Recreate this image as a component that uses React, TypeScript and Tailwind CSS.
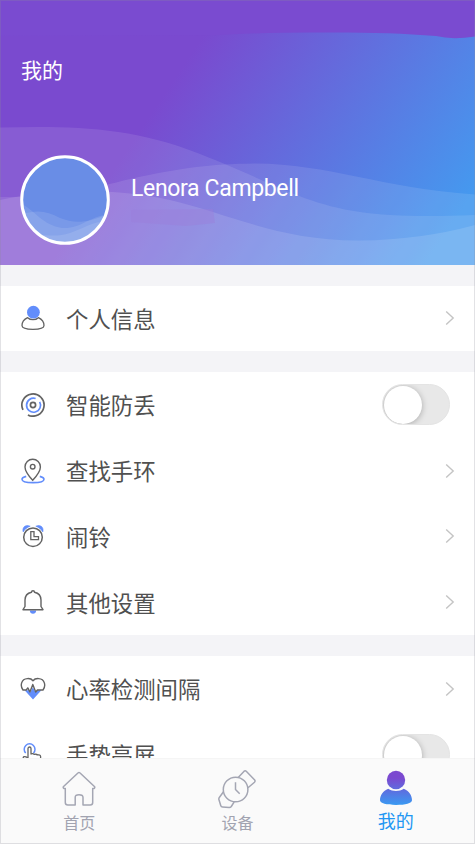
import { useState, type ReactNode } from 'react';

interface MenuItem {
  label: string;
  icon: ReactNode;
  toggle?: boolean;
}

const DARK = '#636363';
const BLUE = '#628dfb';

function PersonIcon() {
  return (
    <svg width="24" height="26" viewBox="0 0 24 26" fill="none">
      <path d="M6.6 12.7C3.3 14.3 1 17.3 1 20.6 1 23 5.8 24.4 12 24.4S23 23 23 20.6c0-3.3-2.3-6.3-5.6-7.9-1.4 1.3-3.3 2-5.4 2s-4-.7-5.4-2Z" stroke={DARK} strokeWidth="1.3" />
      <circle cx="12.4" cy="7.2" r="6.4" fill={BLUE} />
    </svg>
  );
}

function RadarIcon() {
  return (
    <svg width="24" height="24" viewBox="0 0 24 24" fill="none" strokeWidth="1.7">
      <path d="M2 16.9A11.1 11.1 0 1 1 6.9 21.9" stroke={DARK} />
      <path d="M17.7 7.3A7 7 0 1 1 13 5.1" stroke={BLUE} transform="rotate(14 12 12)" />
      <circle cx="12" cy="12" r="2.6" stroke={DARK} />
    </svg>
  );
}

function PinIcon() {
  return (
    <svg width="24" height="26" viewBox="0 0 24 26" fill="none" strokeWidth="1.4">
      <path d="M5.2 18.4C2.700 19 1 20 1 21.200 1 23.300 5.900 24.600 12 24.600s11-1.300 11-3.400c0-1.200-1.700-2.200-4.200-2.800" stroke={BLUE} strokeWidth="1.600" />
      <path d="M11.700 22.300C8.200 18.400 4 13.300 4 8.900a7.700 7.700 0 0 1 15.400 0c0 4.400-4.200 9.500-7.700 13.400Z" stroke={DARK} fill="white" />
      <circle cx="11.700" cy="8.700" r="2.300" stroke={DARK} />
    </svg>
  );
}

function AlarmIcon() {
  return (
    <svg width="24" height="24" viewBox="0 0 24 24" fill="none">
      <path d="M2.200 8C.8 3.500 4.500 0 9.200 2.200 6.200 3.200 3.900 5.200 2.200 8ZM21.800 8C23.200 3.500 19.500 0 14.800 2.200 17.800 3.200 20.100 5.200 21.800 8Z" fill={BLUE} stroke={BLUE} strokeWidth=".6" />
      <circle cx="12" cy="13.200" r="9.300" stroke={DARK} strokeWidth="1.500" />
      <path d="M9.800 7.700h3.200v5h4.500v3H9.800Z" stroke={DARK} strokeWidth="1.300" />
    </svg>
  );
}

function BellIcon() {
  return (
    <svg width="24" height="26" viewBox="0 0 24 26" fill="none">
      <path d="M8.800 21.500h6.400c-.2 2.300-1.400 3.200-3.200 3.200s-3-.9-3.200-3.200Z" fill={BLUE} />
      <path d="M10.500 3.200c0-1.900 3-1.900 3 0 3.800.8 6.500 3.800 6.500 7.800v6.500l2 3.200H2l2-3.200V11c0-4 2.700-7 6.500-7.800Z" stroke={DARK} strokeWidth="1.400" strokeLinejoin="round" />
    </svg>
  );
}

function HeartIcon() {
  return (
    <svg width="26" height="24" viewBox="0 0 26 24" fill="none">
      <path d="M4.600 13.200 13 22.500l8.400-9.300-4.100.1-1.800 2-2.700-5-2.500 5-1.300-2.100Z" fill={BLUE} />
      <path d="M3 13C-.2 8.700 1.200 2 7.300 1.600 9.700 1.400 11.800 2.200 13 3.700 14.200 2.200 16.300 1.400 18.700 1.600 24.800 2 26.200 8.700 23 13h-5.600l-1.700 2L12.800 7.500l-2.900 7.400-2.100-4L6.200 13Z" stroke={DARK} strokeWidth="1.400" strokeLinejoin="round" />
    </svg>
  );
}

function TapIcon() {
  return (
    <svg width="24" height="26" viewBox="0 0 24 26" fill="none">
      <path d="M4.700 11a5.400 5.400 0 1 1 7.800 0" stroke={BLUE} strokeWidth="1.500" />
      <path d="M7 16V6.500c0-2 3-2 3 0V12.500c0-1.200 3.300-1.200 3.300.5 0-1.200 3.200-1 3.200.5 0-1.100 3.100-.9 3.100.9V20c0 3-2 5-5 5h-3c-4 0-5-4-9-8.800C1.200 14.500 4 14 7 16" stroke={DARK} strokeWidth="1.300" />
    </svg>
  );
}

function HomeIcon() {
  return (
    <svg width="36" height="36" viewBox="0 0 36 36" fill="none" stroke="#a4a6b3" strokeWidth="1.500" strokeLinejoin="round">
      <path d="M17.200 1.800 Q18 1 18.800 1.800L33.700 15.800Q34.300 17.700 31.700 17.500V31.500Q31.700 34 29.200 34H22V26.500Q22 23.800 18 23.800T14.200 26.500V34H6.800Q4.300 34 4.300 31.500V17.500Q1.700 17.700 2.300 15.800Z" />
    </svg>
  );
}

function WatchIcon() {
  return (
    <svg width="40" height="40" viewBox="0 0 40 40" fill="none" stroke="#a4a6b3" strokeWidth="1.500" strokeLinejoin="round">
      <circle cx="18.600" cy="20.500" r="12.300" />
      <path d="m21.200 8.500 5.700-6.100Q28.200 1.200 29.500 2.500L37.700 11Q38.500 12.200 37.500 13.200L31 18.800M6.500 22.800 2.300 28.500Q1.600 29.500 1.900 30.500L3.800 36.700Q4.200 38 5.500 38L12.200 38.500Q13.500 38.500 14.300 37.500L17.200 32.800" />
      <path d="M18.500 13.200V20.500L22.700 24.800" />
    </svg>
  );
}

function MineIcon() {
  return (
    <svg width="34" height="36" viewBox="0 0 34 36">
      <defs>
        <linearGradient id="mine" x1="0" y1="8" x2="0" y2="36" gradientUnits="userSpaceOnUse">
          <stop stopColor="#7b49d0" />
          <stop offset="1" stopColor="#379df3" />
        </linearGradient>
      </defs>
      <g fill="url(#mine)">
        <circle cx="17" cy="10" r="9.200" />
        <path d="M9.200 18.800C4 21 1 25.300 1 30.300 1 33.200 7.500 35 17 35s16-1.800 16-4.700c0-5-3-9.300-8.200-11.500-4.500 3-11.100 3-15.600 0Z" />
      </g>
    </svg>
  );
}

const groups: MenuItem[][] = [
  [{ label: '个人信息', icon: <PersonIcon /> }],
  [
    { label: '智能防丢', icon: <RadarIcon />, toggle: true },
    { label: '查找手环', icon: <PinIcon /> },
    { label: '闹铃', icon: <AlarmIcon /> },
    { label: '其他设置', icon: <BellIcon /> },
  ],
  [
    { label: '心率检测间隔', icon: <HeartIcon /> },
    { label: '手势亮屏', icon: <TapIcon />, toggle: true },
  ],
];

function Toggle() {
  const [on, setOn] = useState(false);
  return (
    <button
      onClick={() => setOn(!on)}
      className={`flex h-[41px] w-[68px] items-center overflow-hidden rounded-full border border-[#e4e4e4] p-px ${on ? 'justify-end bg-[#628dfb]' : 'bg-[#e8e8e8]'}`}
    >
      <span className="size-[38px] shrink-0 rounded-full bg-white shadow-[0_1px_6px_0_rgba(0,0,0,0.28)]" />
    </button>
  );
}

function Row({ item }: { item: MenuItem }) {
  return (
    <li className="flex h-[65.800px] items-center pr-[25px] pl-5">
      <span className="flex w-[26px] justify-center">{item.icon}</span>
      <span className="ml-5 flex-1 pt-[3px] text-[22.400px] leading-8 text-[#505050]">{item.label}</span>
      {item.toggle ? (
        <Toggle />
      ) : (
        <svg width="10" height="16" viewBox="0 0 10 16" fill="none" className="-mr-[5px]">
          <path d="M1.200 1.400 8.200 8 1.200 14.600" stroke="#c4c4c4" strokeWidth="1.400" />
        </svg>
      )}
    </li>
  );
}

function HeaderArt() {
  return (
    <svg className="absolute inset-0" width="475" height="265" viewBox="0 0 475 265">
      <defs>
        <linearGradient id="sky" x1="140" y1="130" x2="399" y2="304" gradientUnits="userSpaceOnUse">
          <stop stopColor="#7a4acf" />
          <stop offset="1" stopColor="#4599ef" />
        </linearGradient>
      </defs>
      <rect width="475" height="265" fill="url(#sky)" />
      <path d="M0 0H475V36.500Q452 40 436 36C400 33 360 32 310 32.500Q260 32.500 220 35L0 36Z" fill="#7a4bd0" />
      <g fill="white">
        <path d="M0 127.500C70 126 130 126 200 154C270 181 300 203 360 212Q400 218 475 215V265H0Z" fillOpacity=".1" />
        <path d="M0 197C60 197 90 189 130 179C180 168 210 164 255 163.500C330 164 380 188 475 194.500V265H0Z" fillOpacity=".1" />
        <path d="M0 200C60 188 120 189 170 200C230 214 280 241 360 240.500Q420 240 475 225V265H0Z" fillOpacity=".12" />
      </g>
      <path d="M131 210 213 209 215 223 186 226 131 222Z" fill="#9a7dda" fillOpacity=".4" />
    </svg>
  );
}

function Avatar() {
  return (
    <svg width="90" height="90" viewBox="0 0 90 90">
      <clipPath id="face">
        <circle cx="45" cy="45" r="43" />
      </clipPath>
      <g clipPath="url(#face)">
        <rect width="90" height="90" fill="#698de6" />
        <g fill="white" fillOpacity=".11">
          <path d="M0 48C15 55 22 70 42 73C62 74 67 62 90 59V90H0Z" />
          <path d="M0 60C17 54 27 56 40 63C55 69 68 68 90 58V90H0Z" />
          <path d="M0 76C20 78 30 84 50 78C63 74 72 66 90 66V90H0Z" />
        </g>
      </g>
      <circle cx="45" cy="45" r="43.300" fill="none" stroke="white" strokeWidth="3" />
    </svg>
  );
}

export default function App() {
  return (
    <div className="relative flex h-[844px] w-[475px] flex-col overflow-hidden bg-[#f4f4f7] font-['Roboto','Noto_Sans_CJK_SC',sans-serif]">
      <header className="relative h-[264.500px] shrink-0 text-white">
        <HeaderArt />
        <div className="relative pt-[55px] pl-[21px]">
          <h1 className="text-[21px] leading-8">我的</h1>
          <div className="-ml-px mt-[67.500px] flex items-start">
            <Avatar />
            <p className="ml-[21px] pt-[18px] text-[23px] leading-8 tracking-[-0.340px]">Lenora Campbell</p>
          </div>
        </div>
      </header>

      <main className="flex min-h-0 flex-1 flex-col gap-[20.700px] overflow-hidden pt-[21px]">
        {groups.map((items) => (
          <ul key={items[0].label} className="shrink-0 bg-white">
            {items.map((item) => (
              <Row key={item.label} item={item} />
            ))}
          </ul>
        ))}
      </main>

      <nav className="grid h-[86px] shrink-0 grid-cols-3 border-t border-[#f5f5f5] bg-[#fafafa] text-base text-[#a1a3b0]">
        <a className="flex flex-col items-center pt-[12px]">
          <HomeIcon />
          <span className="mt-[5px] leading-6">首页</span>
        </a>
        <a className="flex flex-col items-center pt-[10px]">
          <WatchIcon />
          <span className="mt-[3px] leading-6">设备</span>
        </a>
        <a className="flex flex-col items-center pt-[11px] text-[18px] text-[#2196f3]">
          <MineIcon />
          <span className="mt-[4px] leading-6">我的</span>
        </a>
      </nav>
      <div className="pointer-events-none absolute inset-0 border border-[#8c8c96]/25" />
    </div>
  );
}
